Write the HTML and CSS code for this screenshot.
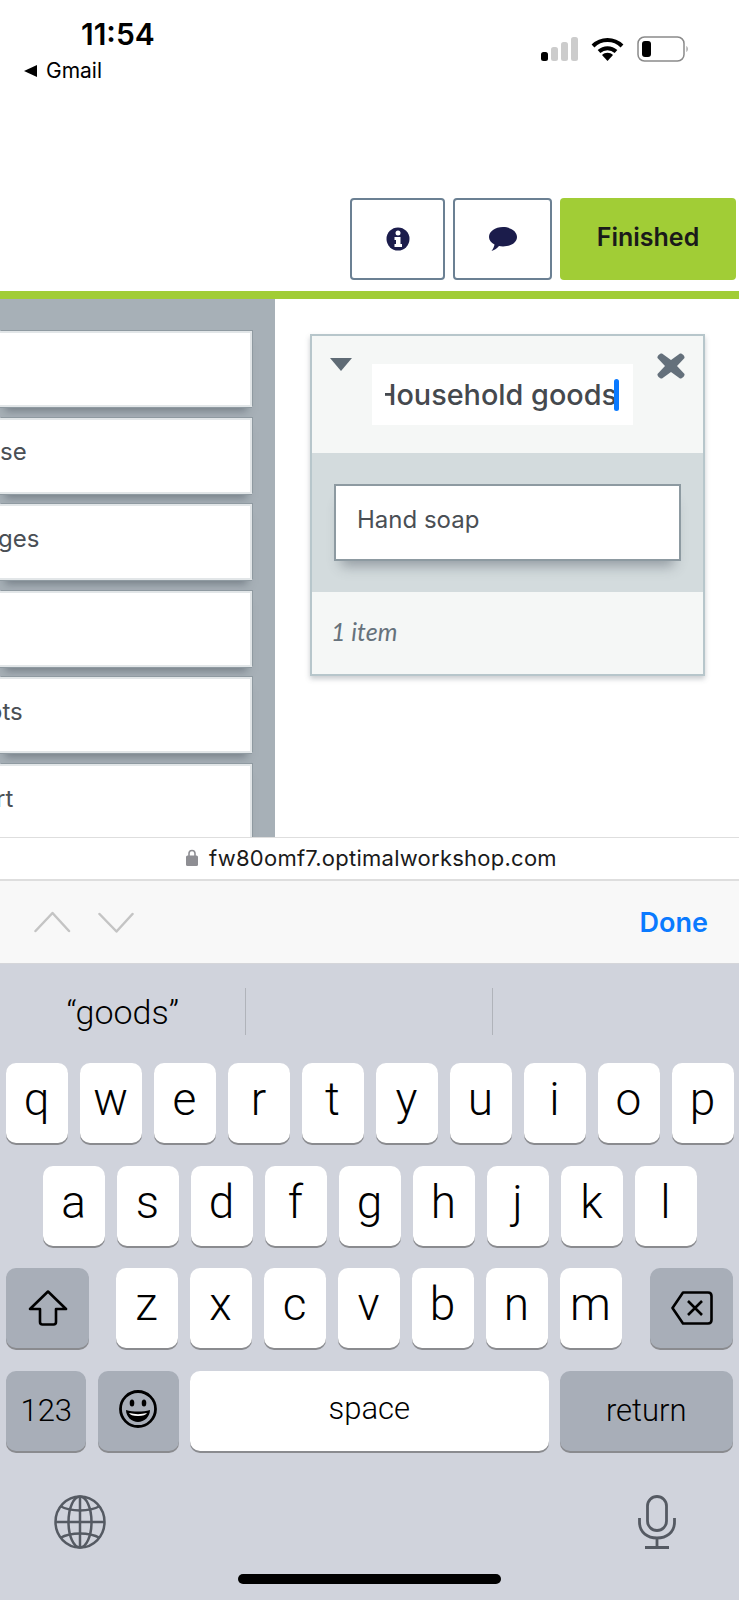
FILE: index.html
```html
<!DOCTYPE html>
<html>
  <head>
    <meta charset="UTF-8" />
    <title>Card sort</title>
    <link rel="stylesheet" href="styles.css">
  </head>
  <body>

    <div class="status">
      <div class="status-left">
        <div class="time">11:54</div>
        <div class="back"><span class="back-arrow"></span>Gmail</div>
      </div>
      <div class="status-icons">
        <svg width="37" height="24" viewBox="0 0 37 24">
          <rect x="0" y="15" width="7" height="9" rx="2.5" fill="#000"/>
          <rect x="10" y="10" width="7" height="14" rx="2.5" fill="#ccc"/>
          <rect x="20" y="5" width="7" height="19" rx="2.5" fill="#ccc"/>
          <rect x="30" y="0" width="7" height="24" rx="2.5" fill="#ccc"/>
        </svg>
        <svg width="33" height="24" viewBox="0 0 33 24">
          <path d="M2 9 C10 1 23 1 31 9" fill="none" stroke="#000" stroke-width="4"/>
          <path d="M8 14.500 C13 10 20 10 25 14.500" fill="none" stroke="#000" stroke-width="4"/>
          <path d="M11 18 C14 15 19 15 22 18 L16.500 24 Z" fill="#000"/>
        </svg>
        <svg width="52" height="26" viewBox="0 0 52 26">
          <rect x="1" y="1" width="46" height="24" rx="6.500" fill="none" stroke="#8a8a8a" stroke-width="1.500"/>
          <rect x="5" y="5" width="9" height="16" rx="3" fill="#000"/>
          <path d="M49.500 10 C51 11 51 15 49.500 16 Z" fill="#8a8a8a"/>
        </svg>
      </div>
    </div>

    <div class="actions">
      <button class="icon-btn info-btn">
        <svg width="24" height="24" viewBox="0 0 24 24">
          <circle cx="12" cy="12" r="11.500" fill="#1b1c4b"/>
          <circle cx="12" cy="6" r="2.500" fill="#fff"/>
          <path d="M8.500 10 H14.500 V17 H16 V20 H8.500 V17 H10 V13 H8.500 Z" fill="#fff"/>
        </svg>
      </button>
      <button class="icon-btn chat-btn">
        <svg width="30" height="25" viewBox="0 0 30 25">
          <path d="M15 0 C23 0 29 4.500 29 10 C29 15.500 23 19.500 15 19.500 C13.500 19.500 12 19.300 11 19 C9 21.500 6 23.500 3.500 24 C5 22 6.300 19.500 6.500 17.500 C3 15.700 1 13 1 10 C1 4.500 7 0 15 0 Z" fill="#1b1c4b"/>
        </svg>
      </button>
      <button class="finished-btn">Finished</button>
    </div>

    <div class="green-bar"></div>

    <div class="workspace">
      <div class="card-list">
        <div class="card"></div>
        <div class="card"><span class="card-text">se</span></div>
        <div class="card"><span class="card-text ges">ges</span></div>
        <div class="card"></div>
        <div class="card"><span class="card-text ots">ots</span></div>
        <div class="card"><span class="card-text rt">rt</span></div>
      </div>

      <div class="category">
        <div class="category-head">
          <span class="caret-down"></span>
          <div class="name-box">
            <div class="name-scroll">
              <span class="name-text">Household goods</span>
              <span class="text-caret"></span>
            </div>
          </div>
          <svg class="close-icon" width="28" height="26" viewBox="0 0 28 26">
            <path d="M5 0.500 L14 7 L23 0.500 C25 0 28 3 27.500 5 L20 13 L27.500 21 C28 23 25 26 23 25.500 L14 19 L5 25.500 C3 26 0 23 0.500 21 L8 13 L0.500 5 C0 3 3 0 5 0.500 Z" fill="#64707b"/>
          </svg>
        </div>
        <div class="category-body">
          <div class="item">Hand soap</div>
        </div>
        <div class="category-foot">1 item</div>
      </div>
    </div>

    <div class="url-bar">
      <svg width="12" height="17" viewBox="0 0 12 17">
        <path d="M3 7 V4.500 C3 0.500 9 0.500 9 4.500 V7" fill="none" stroke="#8e8e93" stroke-width="1.600"/>
        <rect x="0" y="6.500" width="12" height="10.500" rx="1.500" fill="#8e8e93"/>
      </svg>
      <span class="url">fw80omf7.optimalworkshop.com</span>
    </div>

    <div class="form-bar">
      <svg width="100" height="22" viewBox="0 0 100 22">
        <path d="M1.500 20 L18.500 2 L35 20" fill="none" stroke="#c4c4c4" stroke-width="2.500" stroke-linecap="round" stroke-linejoin="round"/>
        <path d="M65.500 3 L82.500 20.500 L98.500 3" fill="none" stroke="#c4c4c4" stroke-width="2.500" stroke-linecap="round" stroke-linejoin="round"/>
      </svg>
      <span class="done">Done</span>
    </div>

    <div class="keyboard">
      <div class="suggestions">
        <div class="suggestion">“goods”</div>
        <div class="suggestion"></div>
        <div class="suggestion"></div>
      </div>

      <div class="key-row">
        <div class="key">q</div><div class="key">w</div><div class="key">e</div><div class="key">r</div><div class="key">t</div>
        <div class="key">y</div><div class="key">u</div><div class="key">i</div><div class="key">o</div><div class="key">p</div>
      </div>
      <div class="key-row">
        <div class="key">a</div><div class="key">s</div><div class="key">d</div><div class="key">f</div><div class="key">g</div>
        <div class="key">h</div><div class="key">j</div><div class="key">k</div><div class="key">l</div>
      </div>
      <div class="key-row">
        <div class="key dark wide">
          <svg width="40" height="36" viewBox="0 0 40 36">
            <path d="M20 1.500 L38 19 H28 V32 C28 33.500 27 34.500 25.500 34.500 H14.500 C13 34.500 12 33.500 12 32 V19 H2 Z" fill="none" stroke="#000" stroke-width="2.600" stroke-linejoin="round"/>
          </svg>
        </div>
        <div class="letters">
          <div class="key">z</div><div class="key">x</div><div class="key">c</div><div class="key">v</div>
          <div class="key">b</div><div class="key">n</div><div class="key">m</div>
        </div>
        <div class="key dark wide">
          <svg width="42" height="34" viewBox="0 0 42 34">
            <path d="M12 1.500 H37 C39.500 1.500 40.500 3 40.500 5 V29 C40.500 31 39.500 32.500 37 32.500 H12 L1.500 17 Z" fill="none" stroke="#000" stroke-width="2.600" stroke-linejoin="round"/>
            <path d="M17 10 L31 24 M31 10 L17 24" fill="none" stroke="#000" stroke-width="2.600"/>
          </svg>
        </div>
      </div>
      <div class="key-row">
        <div class="key dark label num">123</div>
        <div class="key dark emoji">
          <svg width="38" height="38" viewBox="0 0 38 38">
            <circle cx="19" cy="19" r="17.500" fill="none" stroke="#000" stroke-width="2.800"/>
            <ellipse cx="13" cy="13" rx="2.300" ry="3.500" fill="#000"/>
            <ellipse cx="25" cy="13" rx="2.300" ry="3.500" fill="#000"/>
            <path d="M7 20 C14 22 24 22 31 20 C31 27 25 32 19 32 C13 32 7 27 7 20 Z" fill="#000"/>
            <path d="M10 23 C16 24.500 22 24.500 28 23 C27 25 24 26 19 26 C14 26 11 25 10 23 Z" fill="#fff"/>
          </svg>
        </div>
        <div class="key label space">space</div>
        <div class="key dark label return">return</div>
      </div>

      <div class="keyboard-foot">
        <svg width="52" height="54" viewBox="0 0 52 54">
          <ellipse cx="26" cy="27" rx="24.500" ry="25.500" fill="none" stroke="#555a63" stroke-width="2.500"/>
          <ellipse cx="26" cy="27" rx="11.500" ry="25.500" fill="none" stroke="#555a63" stroke-width="2.500"/>
          <path d="M26 1.500 V52.500 M1.500 27 H50.500" fill="none" stroke="#555a63" stroke-width="2.500"/>
          <path d="M6 11 C17 17 35 17 46 11 M6 43 C17 37 35 37 46 43" fill="none" stroke="#555a63" stroke-width="2.500"/>
        </svg>
        <svg width="38" height="54" viewBox="0 0 38 54">
          <rect x="9.500" y="1.500" width="19" height="34" rx="9.500" fill="none" stroke="#555a63" stroke-width="2.800"/>
          <path d="M1.500 23 V27 C1.500 38 10 43 19 43 C28 43 36.500 38 36.500 27 V23 M19 43 V52 M7 52.500 H31" fill="none" stroke="#555a63" stroke-width="2.800"/>
        </svg>
      </div>

      <div class="home-bar"></div>
    </div>

  </body>
</html>
```

FILE: styles.css
```css
body {
  font-family: 'Roboto', 'Liberation Sans', sans-serif;
  margin: 0;
  width: 739px;
  height: 1600px;
  overflow: hidden;
  background: #fff;
  color: #000;
}

.status {
  height: 198px;
  display: flex;
  justify-content: space-between;
  align-items: flex-start;
  box-sizing: border-box;
}

.status-left {
  padding: 15px 0 0 24px;
}

.time {
  font-family: 'Inter', sans-serif;
  font-size: 30px;
  font-weight: 600;
  line-height: 38px;
  margin-left: 57px;
}

.back {
  display: flex;
  align-items: center;
  font-family: 'Inter', sans-serif;
  font-size: 21px;
  line-height: 26px;
  margin-top: 5px;
}

.back-arrow {
  width: 0;
  height: 0;
  margin-right: 9px;
  border-top: 6px solid transparent;
  border-bottom: 6px solid transparent;
  border-right: 13px solid #000;
}

.status-icons {
  display: flex;
  align-items: center;
  gap: 13px;
  padding: 36px 50px 0 0;
}

.actions {
  height: 82px;
  display: flex;
  justify-content: flex-end;
  gap: 8px;
  padding-right: 3px;
  margin-bottom: 11px;
}

.icon-btn {
  height: 82px;
  padding: 0;
  border: 2px solid #6b8093;
  border-radius: 4px;
  background: #fff;
  display: flex;
  align-items: center;
  justify-content: center;
}

.info-btn {
  width: 95px;
}

.chat-btn {
  width: 99px;
}

.finished-btn {
  width: 176px;
  height: 82px;
  padding: 0 0 4px;
  border: none;
  border-radius: 4px;
  background: #a1cd36;
  color: #1a1a1a;
  font-family: 'Inter', sans-serif;
  font-size: 25px;
  font-weight: 600;
}

.green-bar {
  height: 8px;
  background: #a1cd36;
}

.workspace {
  height: 538px;
  display: flex;
  overflow: hidden;
}

.card-list {
  width: 275px;
  flex-shrink: 0;
  box-sizing: border-box;
  padding: 32px 23px 0 0;
  background: #a7b0b7;
  display: flex;
  flex-direction: column;
  gap: 10.600px;
}

.card {
  height: 76px;
  flex-shrink: 0;
  box-sizing: border-box;
  border: 2px solid #e2e6e8;
  border-left: none;
  background: #fff;
  box-shadow: 1px -1px 0 #8f9aa1, 0 1px 0 #8f9aa1, 0 9px 8px -5px rgba(70, 80, 90, 0.5);
  display: flex;
  align-items: center;
  overflow: hidden;
  font-family: 'Inter', sans-serif;
  font-size: 24px;
  color: #4a4f55;
}

.card-text {
  margin-top: -8px;
}

.card-text.ges {
  margin-left: -2px;
}

.card-text.ots {
  margin-left: -12px;
}

.card-text.rt {
  margin-left: -4px;
  margin-top: -6px;
}

.category {
  width: 395px;
  height: 342px;
  margin: 35px 0 0 35px;
  box-sizing: border-box;
  border: 2px solid #b7c6cb;
  background: #f5f7f6;
  box-shadow: 0 3px 5px rgba(80, 90, 100, 0.3);
  display: flex;
  flex-direction: column;
}

.category-head {
  height: 117px;
  flex-shrink: 0;
  position: relative;
  padding: 28px 0 0 60px;
  box-sizing: border-box;
}

.caret-down {
  position: absolute;
  left: 18px;
  top: 22px;
  width: 0;
  height: 0;
  border-left: 11px solid transparent;
  border-right: 11px solid transparent;
  border-top: 13px solid #5f6b75;
}

.close-icon {
  position: absolute;
  right: 18px;
  top: 17px;
}

.name-box {
  width: 261px;
  height: 61px;
  box-sizing: border-box;
  padding: 0 14px 0 13px;
  background: #fff;
}

.name-scroll {
  height: 100%;
  display: flex;
  justify-content: flex-end;
  align-items: center;
  overflow: hidden;
  white-space: nowrap;
  font-family: 'Inter', sans-serif;
  font-size: 28.800px;
  font-weight: 500;
  color: #45494e;
}

.name-text {
  flex-shrink: 0;
}

.text-caret {
  flex-shrink: 0;
  width: 5px;
  height: 32px;
  margin-left: -3px;
  border-radius: 3px;
  background: #0a7aff;
}

.category-body {
  height: 139px;
  flex-shrink: 0;
  box-sizing: border-box;
  padding: 31px 22px 0;
  background: #d3dbdd;
}

.item {
  height: 77px;
  box-sizing: border-box;
  padding: 0 21px 6px;
  border: 2px solid #8d9aa1;
  background: #fff;
  box-shadow: 0 12px 12px -7px rgba(70, 80, 90, 0.45);
  display: flex;
  align-items: center;
  font-family: 'Inter', sans-serif;
  font-size: 24px;
  color: #4a4f55;
}

.category-foot {
  padding: 24px 0 0 19px;
  font-family: 'Lato', sans-serif;
  font-size: 25px;
  font-style: italic;
  color: #66727c;
}

.url-bar {
  height: 44px;
  box-sizing: border-box;
  border-top: 1px solid #dedede;
  border-bottom: 2px solid #dedede;
  background: #fff;
  display: flex;
  align-items: center;
  gap: 11px;
  padding: 0 0 2px 186px;
}

.url {
  font-family: 'Inter', sans-serif;
  font-size: 22px;
  letter-spacing: 0.25px;
  color: #1a1a1a;
}

.form-bar {
  height: 83px;
  box-sizing: border-box;
  background: #f8f8f8;
  border-bottom: 1px solid #d5d6da;
  display: flex;
  justify-content: space-between;
  align-items: center;
  padding: 0 31px 0 34px;
}

.done {
  font-family: 'Inter', sans-serif;
  font-size: 27px;
  font-weight: 600;
  color: #0a7aff;
}

.keyboard {
  height: 636px;
  background: #d0d3dc;
  display: flex;
  flex-direction: column;
}

.suggestions {
  height: 99px;
  flex-shrink: 0;
  display: flex;
  align-items: flex-start;
  padding-top: 24px;
  box-sizing: border-box;
}

.suggestion {
  width: 246.500px;
  height: 47px;
  box-sizing: border-box;
  border-right: 1px solid #b0b3ba;
  display: flex;
  align-items: center;
  justify-content: center;
  font-size: 34px;
  font-weight: 300;
  color: #000;
}

.suggestion:last-child {
  border-right: none;
}

.key-row {
  display: flex;
  justify-content: center;
  gap: 12px;
  margin-bottom: 22.600px;
  padding: 0 6px;
}

.letters {
  display: flex;
  gap: 12px;
  margin: 0 16.500px 0 14.500px;
}

.key {
  width: 62px;
  height: 80px;
  flex-shrink: 0;
  box-sizing: border-box;
  padding-bottom: 8px;
  border-radius: 10px;
  background: #fff;
  box-shadow: 0 2px 0 #8a8b8f;
  display: flex;
  align-items: center;
  justify-content: center;
  font-size: 46px;
  font-weight: 300;
  line-height: 1;
}

.key.dark {
  background: #a8aeb8;
}

.key.wide {
  width: 83px;
  padding-bottom: 0;
}

.key.label {
  font-size: 31px;
  padding-bottom: 4px;
}

.key.num {
  width: 80px;
  margin-right: -0.500px;
  padding-bottom: 0;
}

.key.emoji {
  width: 81px;
  padding-bottom: 4px;
}

.key.space {
  width: 359px;
  margin-left: -1px;
}

.key.return {
  width: 173px;
  margin-left: -1px;
  padding-bottom: 0;
}

.keyboard-foot {
  display: flex;
  justify-content: space-between;
  padding: 22px 63px 0 54px;
}

.home-bar {
  width: 263px;
  height: 10px;
  margin: 25px auto 0;
  border-radius: 5px;
  background: #000;
}
```
